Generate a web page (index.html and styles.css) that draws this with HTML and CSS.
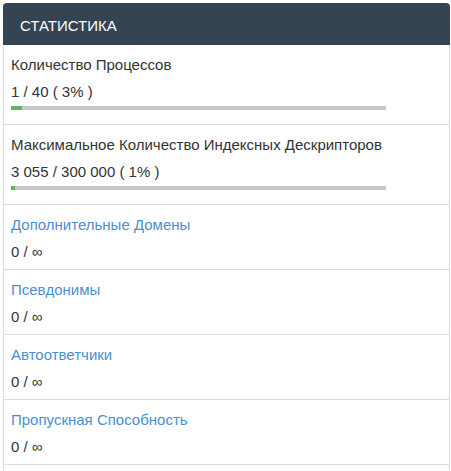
FILE: index.html
```html
<!DOCTYPE html>
<html lang="ru">

<head>
    <meta charset="UTF-8">
    <meta name="viewport" content="width=device-width, initial-scale=1.0">
    <title>Статистика</title>
    <link rel="stylesheet" href="styles.css">
</head>

<body>

    <div class="panel">
        <div class="panel-heading">Статистика</div>

        <div class="stat">
            <div class="stat-title">Количество Процессов</div>
            <div class="stat-value">1 / 40 ( 3% )</div>
            <div class="bar"><div class="bar-fill" style="width: 3%"></div></div>
        </div>

        <div class="stat">
            <div class="stat-title">Максимальное Количество Индексных Дескрипторов</div>
            <div class="stat-value">3 055 / 300 000 ( 1% )</div>
            <div class="bar"><div class="bar-fill" style="width: 1%"></div></div>
        </div>

        <div class="stat">
            <a class="stat-title link" href="#">Дополнительные Домены</a>
            <div class="stat-value">0 / ∞</div>
        </div>

        <div class="stat">
            <a class="stat-title link" href="#">Псевдонимы</a>
            <div class="stat-value">0 / ∞</div>
        </div>

        <div class="stat">
            <a class="stat-title link" href="#">Автоответчики</a>
            <div class="stat-value">0 / ∞</div>
        </div>

        <div class="stat">
            <a class="stat-title link" href="#">Пропускная Способность</a>
            <div class="stat-value">0 / ∞</div>
        </div>
    </div>

</body>

</html>
```

FILE: styles.css
```css
body {
    font-family: "Liberation Sans", Arial, sans-serif;
    background-color: #fff;
    margin: 0;
    padding: 3px 1px 0 3px;
    color: #333;
}

.panel {
    border: 1px solid #ddd;
    border-radius: 4px 4px 0 0;
    background-color: white;
    padding-bottom: 20px;
}

.panel-heading {
    margin: -1px -1px 0;
    background-color: #344453;
    color: white;
    border-radius: 4px 4px 0 0;
    padding: 13px 17px 9px;
    font-size: 15px;
    line-height: 20px;
    text-transform: uppercase;
}

.stat {
    padding: 10px 7px 7px;
    border-bottom: 1px solid #ddd;
}

.stat-title {
    display: block;
    font-size: 15px;
    line-height: 20px;
    margin-bottom: 7px;
}

.link {
    color: #4a8fd3;
    text-decoration: none;
}

.stat-value {
    font-size: 15px;
    line-height: 20px;
}

.bar {
    width: 375px;
    height: 4px;
    background-color: #c8c8c8;
    margin: 4px 0 7px;
}

.bar-fill {
    height: 100%;
    background-color: #5cb85c;
}
```
